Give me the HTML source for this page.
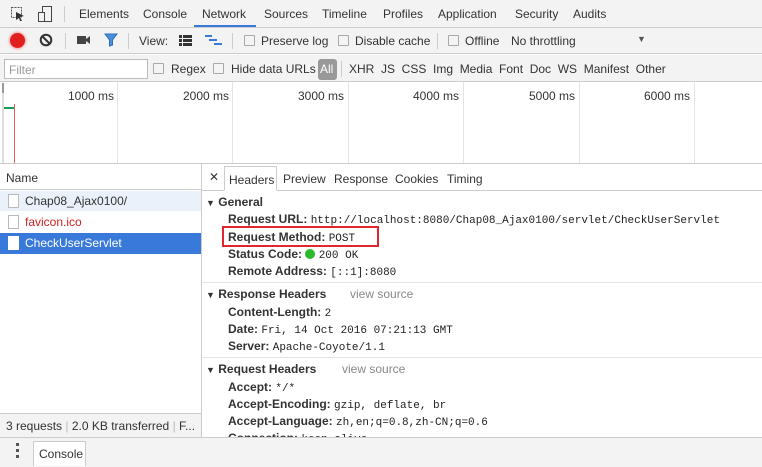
<!DOCTYPE html>
<html><head><meta charset="utf-8"><style>
*{box-sizing:border-box;margin:0;padding:0}
body{width:762px;height:467px;overflow:hidden;background:#fff;font-family:"Liberation Sans",sans-serif;font-size:12px;color:#333;position:relative}
.a{position:absolute;white-space:nowrap}
.cb{position:absolute;width:11px;height:11px;border:1px solid #a9a9a9;background:#f4f4f4;border-radius:1px}
.mono{font-family:"Liberation Mono",monospace;font-size:11px;color:#222}
.k{font-weight:bold;color:#333}
.gl{position:absolute;top:82px;height:82px;width:1px;background:#e4e4e4}
.tl{position:absolute;top:89px;font-size:12px;color:#333}
</style></head><body>
<div class="a" style="left:0;top:0;width:762px;height:28px;background:#f3f3f3;border-bottom:1px solid #ccc"></div>
<svg class="a" style="left:10px;top:6px" width="16" height="16"><rect x="1.5" y="1.5" width="10" height="10" fill="none" stroke="#555" stroke-dasharray="2 1"/><path d="M6 6 L14 10 L10 11 L12 15 L10 15 L9 12 L6 14Z" fill="#333"/></svg>
<svg class="a" style="left:37px;top:5px" width="16" height="18"><rect x="5.5" y="1.5" width="9" height="15" fill="none" stroke="#444"/><rect x="1.5" y="7.5" width="6" height="9" fill="#f3f3f3" stroke="#444"/></svg>
<div class="a" style="left:64px;top:6px;width:1px;height:16px;background:#ccc"></div>
<div class="a" style="left:79px;top:7px;color:#333">Elements</div>
<div class="a" style="left:143px;top:7px">Console</div>
<div class="a" style="left:202px;top:7px">Network</div>
<div class="a" style="left:194px;top:25px;width:62px;height:2px;background:#3879d9"></div>
<div class="a" style="left:264px;top:7px">Sources</div>
<div class="a" style="left:322px;top:7px">Timeline</div>
<div class="a" style="left:383px;top:7px">Profiles</div>
<div class="a" style="left:438px;top:7px">Application</div>
<div class="a" style="left:515px;top:7px">Security</div>
<div class="a" style="left:573px;top:7px">Audits</div>
<div class="a" style="left:0;top:28px;width:762px;height:26px;background:#f3f3f3;border-bottom:1px solid #ccc"></div>
<div class="a" style="left:10px;top:33px;width:15px;height:15px;border-radius:50%;background:#e21f1f;box-shadow:0 0 2px 1px #f7a0a0"></div>
<svg class="a" style="left:39px;top:33px" width="14" height="14"><circle cx="7" cy="7" r="5.3" fill="none" stroke="#333" stroke-width="2"/><line x1="3.5" y1="3.5" x2="10.5" y2="10.5" stroke="#333" stroke-width="2"/></svg>
<div class="a" style="left:65px;top:33px;width:1px;height:16px;background:#ccc"></div>
<svg class="a" style="left:77px;top:35px" width="14" height="10"><rect x="0" y="1" width="9" height="8" fill="#444"/><path d="M9 4 L13 1 V9 L9 6Z" fill="#444"/></svg>
<svg class="a" style="left:104px;top:33px" width="14" height="14"><path d="M1 1 H13 L8.5 7 V12 L5.5 13 V7Z" fill="#4a8fd8" stroke="#2a6fc0"/></svg>
<div class="a" style="left:128px;top:33px;width:1px;height:16px;background:#ccc"></div>
<div class="a" style="left:139px;top:34px;color:#333">View:</div>
<svg class="a" style="left:179px;top:35px" width="13" height="11"><rect x="0" y="0" width="3" height="3" fill="#333"/><rect x="4" y="0" width="9" height="3" fill="#333"/><rect x="0" y="4" width="3" height="3" fill="#333"/><rect x="4" y="4" width="9" height="3" fill="#333"/><rect x="0" y="8" width="3" height="3" fill="#333"/><rect x="4" y="8" width="9" height="3" fill="#333"/></svg>
<svg class="a" style="left:205px;top:35px" width="18" height="11"><rect x="0" y="0" width="7" height="2" fill="#3879d9"/><rect x="4" y="4" width="8" height="2" fill="#3879d9"/><rect x="9" y="8" width="8" height="2" fill="#3879d9"/></svg>
<div class="a" style="left:232px;top:33px;width:1px;height:16px;background:#ccc"></div>
<div class="cb" style="left:244px;top:35px"></div><div class="a" style="left:261px;top:34px">Preserve log</div>
<div class="cb" style="left:338px;top:35px"></div><div class="a" style="left:355px;top:34px">Disable cache</div>
<div class="a" style="left:437px;top:33px;width:1px;height:16px;background:#ccc"></div>
<div class="cb" style="left:448px;top:35px"></div><div class="a" style="left:465px;top:34px">Offline</div>
<div class="a" style="left:511px;top:34px">No throttling</div>
<div class="a" style="left:637px;top:34px;font-size:9px;color:#555">▼</div>
<div class="a" style="left:0;top:55px;width:762px;height:27px;background:#f3f3f3;border-bottom:1px solid #ccc"></div>
<div class="a" style="left:4px;top:59px;width:144px;height:20px;background:#fff;border:1px solid #bbb;color:#999;padding:3px 4px">Filter</div>
<div class="cb" style="left:153px;top:63px"></div><div class="a" style="left:171px;top:62px">Regex</div>
<div class="cb" style="left:213px;top:63px"></div><div class="a" style="left:231px;top:62px">Hide data URLs</div>
<div class="a" style="left:318px;top:59px;width:19px;height:21px;background:#999;border-radius:3px;color:#fff;font-size:12px;padding:3px 0 0 2px">All</div>
<div class="a" style="left:341px;top:61px;width:1px;height:16px;background:#ccc"></div>
<div class="a" style="left:349px;top:62px">XHR&nbsp;&nbsp;JS&nbsp;&nbsp;CSS&nbsp;&nbsp;Img&nbsp;&nbsp;Media&nbsp;&nbsp;Font&nbsp;&nbsp;Doc&nbsp;&nbsp;WS&nbsp;&nbsp;Manifest&nbsp;&nbsp;Other</div>
<div class="gl" style="left:117px"></div><div class="gl" style="left:232px"></div><div class="gl" style="left:348px"></div><div class="gl" style="left:463px"></div><div class="gl" style="left:579px"></div><div class="gl" style="left:694px"></div>
<div class="tl" style="left:68px">1000 ms</div><div class="tl" style="left:183px">2000 ms</div><div class="tl" style="left:298px">3000 ms</div><div class="tl" style="left:413px">4000 ms</div><div class="tl" style="left:529px">5000 ms</div><div class="tl" style="left:644px">6000 ms</div>
<div class="a" style="left:2px;top:83px;width:2px;height:80px;background:#ddd"></div>
<div class="a" style="left:2px;top:83px;width:2px;height:10px;background:#999"></div>
<div class="a" style="left:4px;top:107px;width:10px;height:2px;background:#1a9b5a"></div>
<div class="a" style="left:14px;top:104px;width:1px;height:60px;background:#e06060"></div>
<div class="a" style="left:0;top:163px;width:762px;height:1px;background:#ccc"></div>
<div class="a" style="left:0;top:164px;width:201px;height:26px;background:#fff;border-bottom:1px solid #ccc;padding:7px 6px">Name</div>
<div class="a" style="left:201px;top:164px;width:1px;height:273px;background:#ccc"></div>
<div class="a" style="left:0;top:191px;width:201px;height:20px;background:#eaf1fb"></div>
<div class="a" style="left:8px;top:194px;width:11px;height:14px;background:#fff;border:1px solid #bbb"></div>
<div class="a" style="left:25px;top:194px">Chap08_Ajax0100/</div>
<div class="a" style="left:8px;top:215px;width:11px;height:14px;background:#fff;border:1px solid #bbb"></div>
<div class="a" style="left:25px;top:215px;color:#d32020">favicon.ico</div>
<div class="a" style="left:0;top:233px;width:201px;height:21px;background:#3879d9"></div>
<div class="a" style="left:8px;top:236px;width:11px;height:14px;background:#fff"></div>
<div class="a" style="left:25px;top:236px;color:#fff">CheckUserServlet</div>
<div class="a" style="left:0;top:413px;width:201px;height:24px;background:#f3f3f3;border-top:1px solid #ccc;padding:5px 6px;color:#333">3 requests <span style="color:#bbb">|</span> 2.0 KB transferred <span style="color:#bbb">|</span> F...</div>
<div class="a" style="left:202px;top:164px;width:560px;height:27px;border-bottom:1px solid #ccc"></div>
<div class="a" style="left:209px;top:170px;font-size:12px;color:#333">✕</div>
<div class="a" style="left:224px;top:166px;width:53px;height:25px;border:1px solid #ccc;border-bottom:1px solid #fff;background:#fff;padding:6px 4px">Headers</div>
<div class="a" style="left:283px;top:172px">Preview</div>
<div class="a" style="left:334px;top:172px">Response</div>
<div class="a" style="left:395px;top:172px">Cookies</div>
<div class="a" style="left:447px;top:172px">Timing</div>
<div class="a k" style="left:206px;top:195px"><span style="font-size:9px">▼</span> General</div>
<div class="a" style="left:228px;top:212px"><span class="k">Request URL:</span> <span class="mono">http://localhost:8080/Chap08_Ajax0100/servlet/CheckUserServlet</span></div>
<div class="a" style="left:222px;top:226px;width:157px;height:21px;border:2px solid #e0282c"></div>
<div class="a" style="left:228px;top:230px"><span class="k">Request Method:</span> <span class="mono">POST</span></div>
<div class="a" style="left:228px;top:247px"><span class="k">Status Code:</span> <span style="display:inline-block;width:10px;height:10px;border-radius:50%;background:#2cba2c;vertical-align:-1px"></span> <span class="mono">200 OK</span></div>
<div class="a" style="left:228px;top:264px"><span class="k">Remote Address:</span> <span class="mono">[::1]:8080</span></div>
<div class="a" style="left:202px;top:282px;width:560px;height:1px;background:#e4e4e4"></div>
<div class="a k" style="left:206px;top:287px"><span style="font-size:9px">▼</span> Response Headers</div>
<div class="a" style="left:350px;top:287px;color:#888">view source</div>
<div class="a" style="left:228px;top:305px"><span class="k">Content-Length:</span> <span class="mono">2</span></div>
<div class="a" style="left:228px;top:322px"><span class="k">Date:</span> <span class="mono">Fri, 14 Oct 2016 07:21:13 GMT</span></div>
<div class="a" style="left:228px;top:339px"><span class="k">Server:</span> <span class="mono">Apache-Coyote/1.1</span></div>
<div class="a" style="left:202px;top:357px;width:560px;height:1px;background:#e4e4e4"></div>
<div class="a k" style="left:206px;top:362px"><span style="font-size:9px">▼</span> Request Headers</div>
<div class="a" style="left:342px;top:362px;color:#888">view source</div>
<div class="a" style="left:228px;top:380px"><span class="k">Accept:</span> <span class="mono">*/*</span></div>
<div class="a" style="left:228px;top:397px"><span class="k">Accept-Encoding:</span> <span class="mono">gzip, deflate, br</span></div>
<div class="a" style="left:228px;top:414px"><span class="k">Accept-Language:</span> <span class="mono">zh,en;q=0.8,zh-CN;q=0.6</span></div>
<div class="a" style="left:228px;top:431px"><span class="k">Connection:</span> <span class="mono">keep-alive</span></div>
<div class="a" style="left:0;top:437px;width:762px;height:30px;background:#f3f3f3;border-top:1px solid #ccc"></div>
<div class="a" style="left:16px;top:443px;width:3px;height:3px;background:#555;box-shadow:0 6px 0 #555,0 12px 0 #555"></div>
<div class="a" style="left:33px;top:441px;width:53px;height:25px;background:#fff;border:1px solid #ccc;border-bottom:none;padding:5px 5px">Console</div>
</body></html>
